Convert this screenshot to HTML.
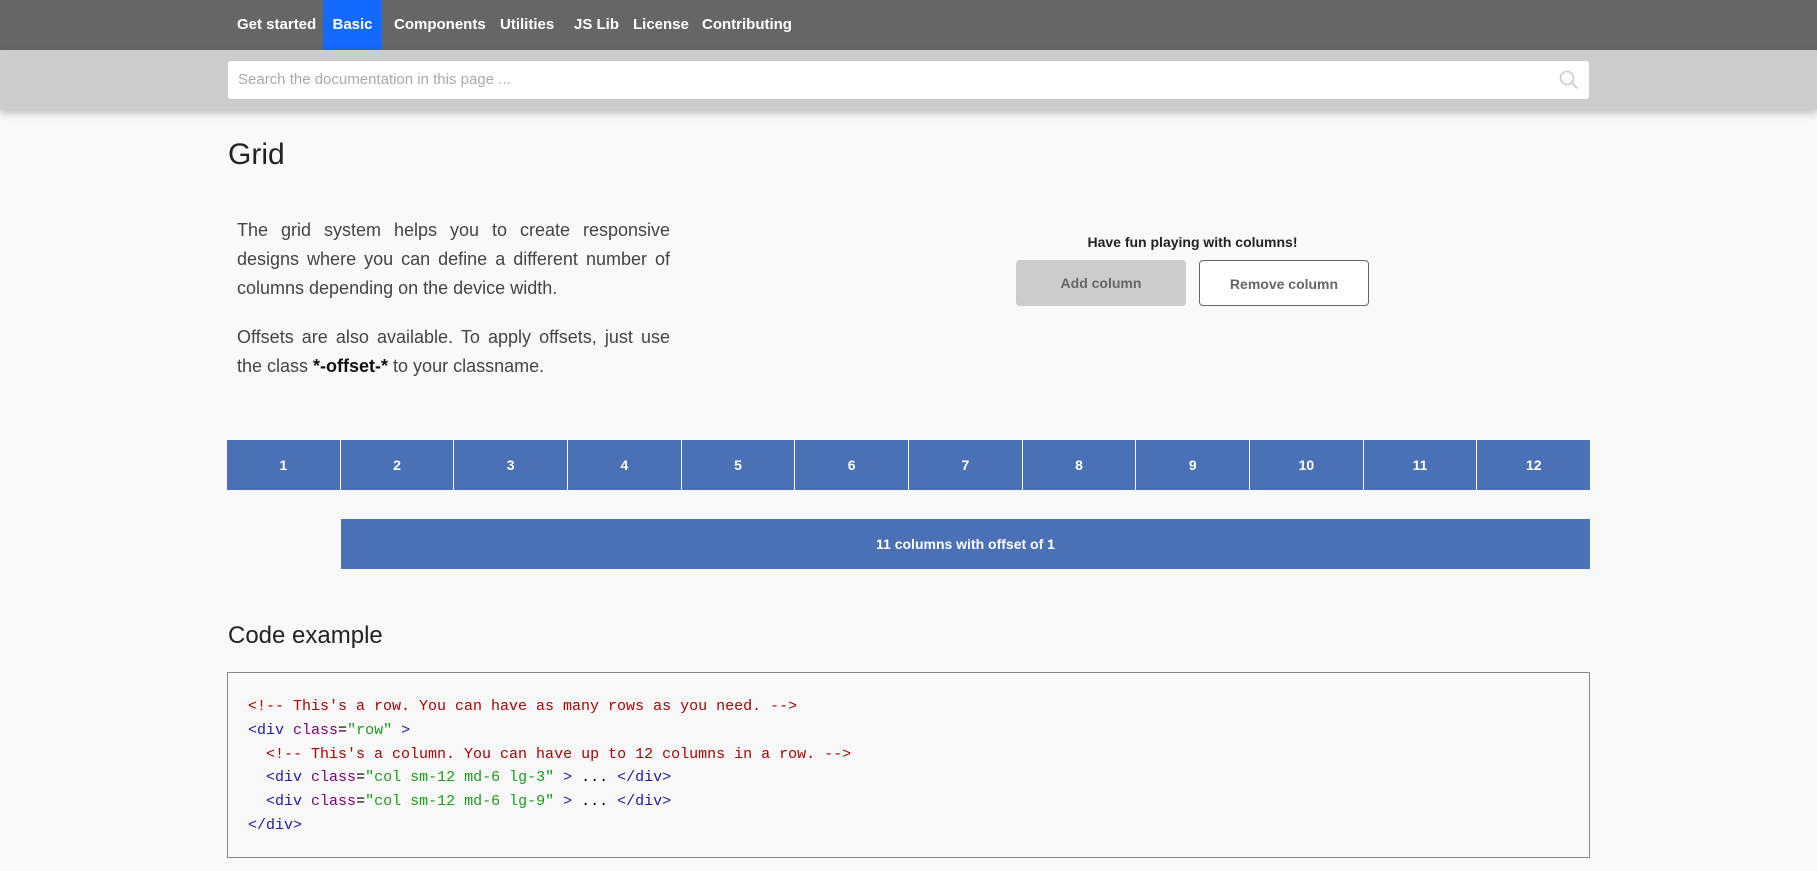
<!DOCTYPE html>
<html><head><meta charset="utf-8"><style>
*{box-sizing:border-box;margin:0;padding:0}
body{width:1817px;height:871px;overflow:hidden;background:#f9f9f9;font-family:"Liberation Sans",sans-serif;position:relative}
.nav{position:absolute;left:0;top:0;width:1817px;height:50px;background:#666}
.nav span{position:absolute;top:0;height:50px;line-height:50px;color:#fff;font-weight:bold;font-size:15px}
.band{position:absolute;left:0;top:50px;width:1817px;height:60px;background:#ccc;box-shadow:0 3px 8px rgba(0,0,0,.25)}
.search{position:absolute;left:228px;top:61px;width:1361px;height:38px;background:#fff;border-radius:3px;color:#aaa;font-size:15px;line-height:38px;padding-left:10px}
.abs{position:absolute}
p.t{position:absolute;left:237px;width:433px;font-size:18px;line-height:29px;color:#444;text-align:justify}
.btn{position:absolute;top:260px;width:170px;height:46px;border-radius:4px;font-size:14px;font-weight:bold;color:#666;text-align:center;line-height:46px}
.grid{position:absolute;left:227px;top:440px;width:1363px;height:50px;display:flex}
.grid div{flex:1;background:#4a70b5;color:#fff;font-weight:bold;font-size:14px;text-align:center;line-height:50px;border-left:1px solid #fff}
.grid div:first-child{border-left:none}
.code{position:absolute;left:227px;top:672px;width:1363px;height:186px;border:1px solid #888;background:#f9f9f9;font-family:"Liberation Mono",monospace;font-size:15px;line-height:23.8px;padding:22px 0 0 20px;white-space:pre;color:#000}
.c{color:#a00}.tg{color:#1a1aa6}.at{color:#800080}.s{color:#1a9a1a}
</style></head><body>
<div class="nav">
<span style="left:237px">Get started</span>
<span style="left:323px;width:59px;background:#1469ff;text-align:center">Basic</span>
<span style="left:394px">Components</span>
<span style="left:500px">Utilities</span>
<span style="left:574px">JS Lib</span>
<span style="left:633px">License</span>
<span style="left:702px">Contributing</span>
</div>
<div class="band"></div>
<div class="search">Search the documentation in this page ...
<svg style="position:absolute;right:10px;top:9px" width="20" height="20" viewBox="0 0 20 20"><circle cx="8" cy="8" r="6.5" fill="none" stroke="#ccc" stroke-width="1.6"/><line x1="13" y1="13" x2="18.5" y2="18.5" stroke="#ccc" stroke-width="1.6"/></svg></div>
<div class="abs" style="left:228px;top:138px;font-size:30px;color:#222">Grid</div>
<p class="t" style="top:216px">The grid system helps you to create responsive designs where you can define a different number of columns depending on the device width.</p>
<p class="t" style="top:323px">Offsets are also available. To apply offsets, just use the class <b style="color:#111">*-offset-*</b> to your classname.</p>
<div class="abs" style="left:1016px;width:353px;top:234px;text-align:center;font-size:14px;font-weight:bold;color:#222">Have fun playing with columns!</div>
<div class="btn" style="left:1016px;background:#ccc">Add column</div>
<div class="btn" style="left:1199px;border:1px solid #666;background:#fff">Remove column</div>
<div class="grid"><div>1</div><div>2</div><div>3</div><div>4</div><div>5</div><div>6</div><div>7</div><div>8</div><div>9</div><div>10</div><div>11</div><div>12</div></div>
<div class="abs" style="left:341px;top:519px;width:1249px;height:50px;background:#4a70b5;color:#fff;font-weight:bold;font-size:14px;text-align:center;line-height:50px">11 columns with offset of 1</div>
<div class="abs" style="left:228px;top:622px;font-size:24px;color:#222">Code example</div>
<div class="code"><span class="c">&lt;!-- This's a row. You can have as many rows as you need. --&gt;</span>
<span class="tg">&lt;div</span> <span class="at">class</span>=<span class="s">"row"</span> <span class="tg">&gt;</span>
  <span class="c">&lt;!-- This's a column. You can have up to 12 columns in a row. --&gt;</span>
  <span class="tg">&lt;div</span> <span class="at">class</span>=<span class="s">"col sm-12 md-6 lg-3"</span> <span class="tg">&gt;</span> ... <span class="tg">&lt;/div&gt;</span>
  <span class="tg">&lt;div</span> <span class="at">class</span>=<span class="s">"col sm-12 md-6 lg-9"</span> <span class="tg">&gt;</span> ... <span class="tg">&lt;/div&gt;</span>
<span class="tg">&lt;/div&gt;</span></div>
</body></html>
